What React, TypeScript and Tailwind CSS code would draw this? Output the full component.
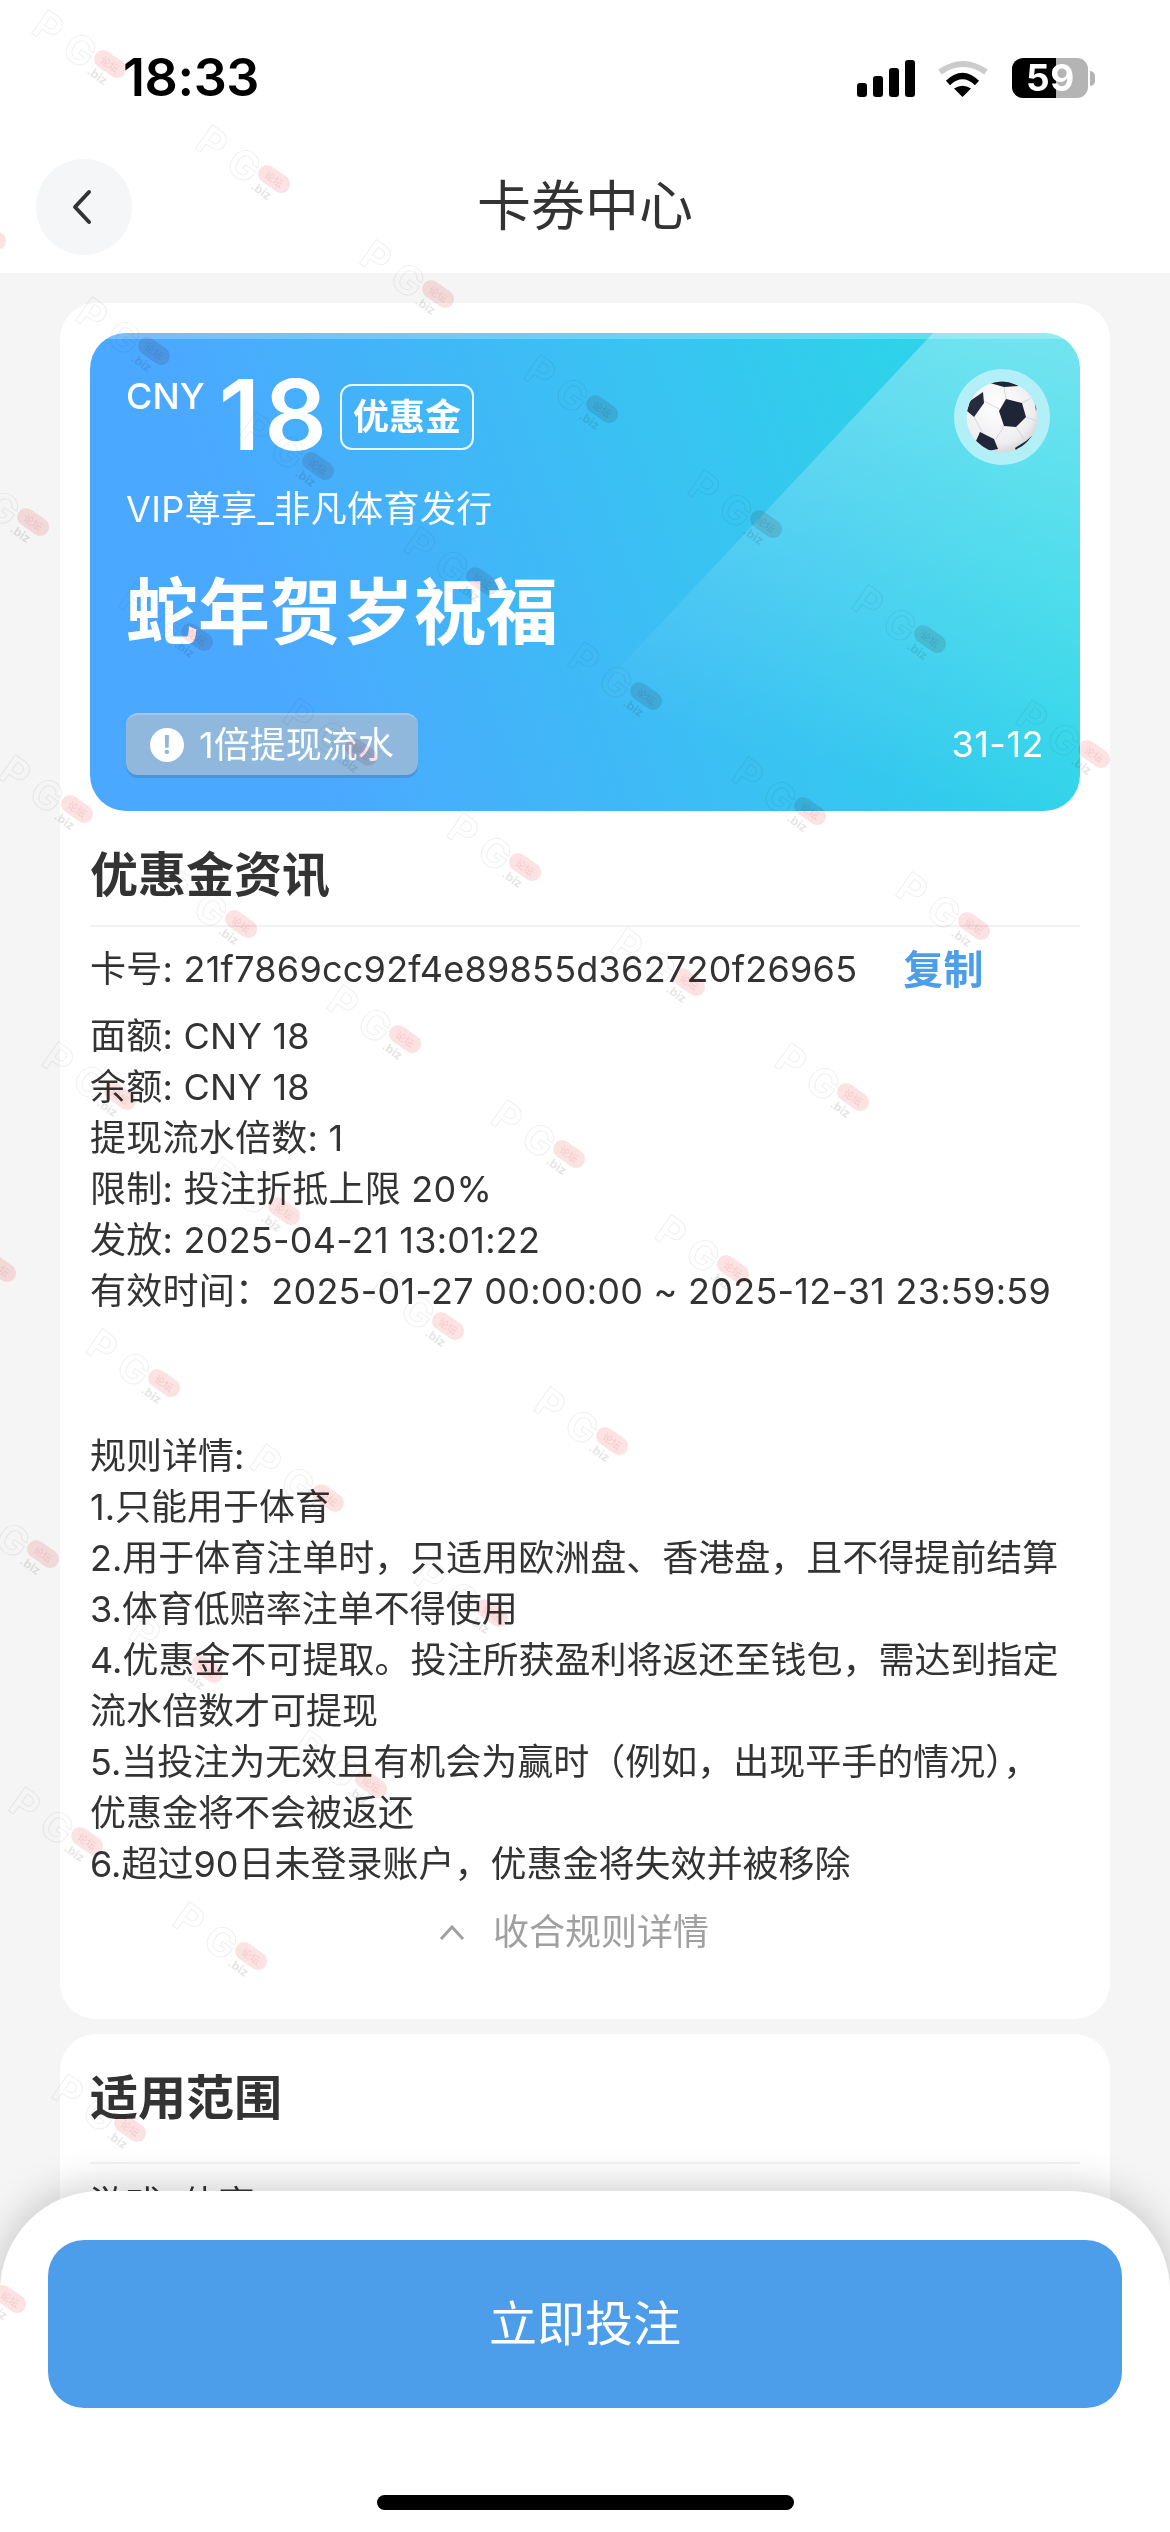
const rows = [
  '面额: CNY 18',
  '余额: CNY 18',
  '提现流水倍数: 1',
  '限制: 投注折抵上限 20%',
  '发放: 2025-04-21 13:01:22',
  '有效时间：2025-01-27 00:00:00 ~ 2025-12-31 23:59:59',
]

const rules = [
  '规则详情:',
  '1.只能用于体育',
  '2.用于体育注单时，只适用欧洲盘、香港盘，且不得提前结算',
  '3.体育低赔率注单不得使用',
  '4.优惠金不可提取。投注所获盈利将返还至钱包，需达到指定',
  '流水倍数才可提现',
  '5.当投注为无效且有机会为赢时（例如，出现平手的情况），',
  '优惠金将不会被返还',
  '6.超过90日未登录账户，优惠金将失效并被移除',
]

// watermark repeats on a skewed lattice, 7 across and 10 down
const marks: { x: number; y: number }[] = []
for (let n = 0; n <= 6; n++) {
  for (let m = 0; m <= 9; m++) {
    const x = 34 + n * 164 - m * 120.5
    const y = 14 + n * 115 + m * 171.7
    if (x > -130) marks.push({ x, y })
  }
}

const Mark = ({ x, y }: { x: number; y: number }) => (
  <div
    className="absolute w-[110px] h-[30px] rotate-[35deg] origin-top-left mix-blend-multiply"
    style={{ left: x + 8, top: y }}
  >
    <span className="absolute left-0 top-[-12px] text-[40px] leading-[40px] font-bold tracking-[11px] text-transparent [-webkit-text-stroke:1px_#f0f0f0]">
      PG
    </span>
    <span className="absolute left-[67px] top-[-7px] w-[35px] h-[18px] rounded-full bg-[#fce2e2] text-[10px] leading-[18px] text-center text-[#f5c9c9]">
      论坛
    </span>
    <span className="absolute left-[70px] top-[12px] text-[12px] leading-[14px] font-bold text-[#e6e6e6]">.biz</span>
  </div>
)

const Ball = () => (
  <svg width="72" height="72" viewBox="0 0 72 72">
    <defs>
      <clipPath id="ball">
        <circle cx="36" cy="36" r="35.5" />
      </clipPath>
      <radialGradient id="ballfill" cx="0.42" cy="0.35" r="0.75">
        <stop offset="0" stopColor="#ffffff" />
        <stop offset="0.7" stopColor="#eeeef0" />
        <stop offset="1" stopColor="#c4c4cc" />
      </radialGradient>
    </defs>
    <g clipPath="url(#ball)">
      <circle cx="36" cy="36" r="36" fill="url(#ballfill)" />
      <path d="M18 20 L33 28 M8 36 L18 54 M38 45 L30 58 M50 46 L58 58 M40 18 L38 6 M56 22 L67 16 M60 36 L71 40" fill="none" stroke="#d6d6dc" strokeWidth="1" />
      <path d="M40 18 L56 22 L60 36 L50 46 L38 45 L33 30 Z" fill="#1f2437" />
      <path d="M17 11 L18 22 L8 36 L1 30 L4 20 Z" fill="#262b3d" />
      <path d="M14 51 L28 58 L32 68 L22 70 L10 60 Z" fill="#20253a" />
      <path d="M67 54 L58 65 L50 70 L49 67 L60 60 Z" fill="#242a3e" />
      <path d="M24 2 L38 -1 L53 5 L38 6 Z" fill="#1f2437" />
      <path d="M67 9 L72 24 L70 30 Z" fill="#2a3044" />
    </g>
  </svg>
)

const StatusBar = () => (
  <div className="h-[156px] relative flex items-center justify-between pl-[123px] pr-[75px]">
    <span className="text-[52px] leading-[52px] font-semibold text-black tracking-[-0.4px]">18:33</span>
    <div className="flex items-center">
      <div className="flex items-end gap-[6px] h-[37px]">
        <div className="w-[10px] h-[14px] rounded-[3px] bg-black" />
        <div className="w-[10px] h-[21px] rounded-[3px] bg-black" />
        <div className="w-[10px] h-[29px] rounded-[3px] bg-black" />
        <div className="w-[10px] h-[37px] rounded-[3px] bg-black" />
      </div>
      <svg className="ml-[22px]" width="52" height="38" viewBox="0 0 52 38">
        <path d="M3 13 Q26 -3 49 13" fill="none" stroke="#cccccc" strokeWidth="6" />
        <path d="M11 24 Q25.5 10 40 24" fill="none" stroke="#000" strokeWidth="6" />
        <path d="M25.5 38 L17 29.5 Q25.5 24 34 29.5 Z" fill="#000" />
      </svg>
      <div className="relative ml-[23px] flex w-[76px] h-[40px] rounded-[11px] overflow-hidden">
        <div className="w-[44px] bg-black" />
        <div className="flex-1 bg-[#b4b4b4]" />
        <span className="absolute left-[14px] top-0 text-[37px] leading-[40px] font-bold text-white tracking-[0.5px]">59</span>
      </div>
      <div className="ml-[2px] w-[5px] h-[15px] rounded-r-full bg-[#b4b4b4]" />
    </div>
  </div>
)

const Voucher = () => (
  <div className="relative h-[478px] rounded-[36px] overflow-hidden bg-[linear-gradient(70deg,#4ba8ff_20%,#2bd6e8_90%)] text-white">
    <div className="absolute inset-0 [clip-path:polygon(843px_0,100%_0,100%_100%,395px_100%)] bg-[linear-gradient(195deg,rgba(255,255,255,0.34),rgba(255,255,255,0)_68%)]" />
    <div className="absolute inset-x-0 top-0 h-[6px] bg-white/25" />
    <div className="absolute left-[36px] top-[36px] right-[36px] bottom-[36px] flex flex-col">
      <div className="flex items-start h-[96px]">
        <span className="text-[36px] leading-[36px] font-medium mt-[9px]">CNY</span>
        <span className="text-[98px] leading-[96px] font-semibold ml-[14px] mt-[-2px] tracking-[4px]">18</span>
        <span className="ml-[9px] mt-[15px] w-[134px] h-[66px] rounded-[12px] border-2 border-white/90 flex items-center justify-center text-[36px] font-bold">
          优惠金
        </span>
      </div>
      <div className="text-[36px] leading-[36px] mt-[26px] tracking-[0.4px]">VIP尊享_非凡体育发行</div>
      <div className="text-[72px] leading-[72px] font-bold mt-[49px]">蛇年贺岁祝福</div>
      <div className="mt-auto flex items-center justify-between">
        <div className="flex items-center w-[292px] h-[62px] mt-[-26px] rounded-[12px] bg-[#8fb8dc] border-t-2 border-[#a3c8ec] shadow-[0_3px_0_#4a96d8] pl-[24px]">
          <div className="w-[34px] h-[34px] rounded-full bg-white flex items-center justify-center text-[26px] leading-[34px] font-bold text-[#8fb8dc]">!</div>
          <span className="text-[36px] leading-[36px] ml-[15px]">1倍提现流水</span>
        </div>
        <span className="text-[36px] leading-[36px] mt-[-26px] tracking-[0.5px]">31-12</span>
      </div>
    </div>
    <div className="absolute right-[30px] top-[36px] w-[96px] h-[96px] rounded-full bg-[#b2eff6] flex items-center justify-center">
      <Ball />
    </div>
  </div>
)

export default function App() {
  return (
    <div lang="zh-CN" className="relative w-[1170px] h-[2532px] overflow-hidden bg-[#f5f5f5] font-['Inter','Noto_Sans_CJK_SC',sans-serif] text-[#333333]">
      <header className="h-[273px] bg-white">
        <StatusBar />
        <nav className="grid grid-cols-3 items-center h-[102px] px-[36px]">
          <button className="w-[96px] h-[96px] rounded-full bg-[#f5f6f8] flex items-center justify-center">
            <svg className="mr-[6px]" width="24" height="36" viewBox="0 0 24 36" fill="none">
              <path d="M20 3 L6 18 L20 33" stroke="#333" strokeWidth="4" strokeLinecap="round" strokeLinejoin="round" />
            </svg>
          </button>
          <h1 className="text-center text-[54px] leading-[60px] font-normal whitespace-nowrap">卡券中心</h1>
        </nav>
      </header>

      <main className="px-[60px] pt-[30px] flex flex-col gap-[15px]">
        <section className="bg-white rounded-[36px] px-[30px] pt-[30px] pb-[61px]">
          <Voucher />
          <h2 className="pt-[40px] pb-[26px] text-[48px] leading-[48px] font-bold border-b-2 border-[#f2f2f2]">优惠金资讯</h2>
          <div className="mt-[17px] flex items-center text-[36px] leading-[51px] tracking-[0.25px]">
            <span>卡号: 21f7869cc92f4e89855d362720f26965</span>
            <span className="ml-[46px] text-[40px] font-bold text-[#4c9eea]">复制</span>
          </div>
          <div className="mt-[16px] text-[36px] leading-[51px] tracking-[0.25px]">
            {rows.map((r) => (
              <div key={r}>{r}</div>
            ))}
          </div>
          <div className="mt-[114px] text-[36px] leading-[51px]">
            {rules.map((r) => (
              <div key={r}>{r}</div>
            ))}
          </div>
          <div className="mt-[17px] pr-[22px] flex items-center justify-center gap-[28px] text-[36px] leading-[51px] text-[#a0a0a0]">
            <svg width="26" height="16" viewBox="0 0 26 16" fill="none">
              <path d="M2 14 L13 2 L24 14" stroke="#a0a0a0" strokeWidth="3" />
            </svg>
            <span>收合规则详情</span>
          </div>
        </section>

        <section className="bg-white rounded-[36px] px-[30px] pt-[40px] pb-[40px]">
          <h2 className="pb-[40px] text-[48px] leading-[48px] font-bold border-b-2 border-[#f2f2f2]">适用范围</h2>
          <div className="mt-[15px] text-[36px] leading-[51px]">游戏: 体育</div>
        </section>
      </main>

      {/* bottom action sheet */}
      <div className="absolute left-0 right-0 bottom-0 h-[341px] bg-white rounded-t-[100px] shadow-[0_-4px_40px_rgba(0,0,0,0.2)] px-[48px] pt-[49px]">
        <button className="w-full h-[168px] rounded-[36px] bg-[#4c9eea] text-white text-[48px]">立即投注</button>
        <div className="mx-auto mt-[87px] w-[417px] h-[15px] rounded-full bg-black" />
      </div>

      <div className="absolute inset-0 pointer-events-none">
        {marks.map((m) => (
          <Mark key={`${m.x}-${m.y}`} x={m.x} y={m.y} />
        ))}
      </div>
    </div>
  )
}
